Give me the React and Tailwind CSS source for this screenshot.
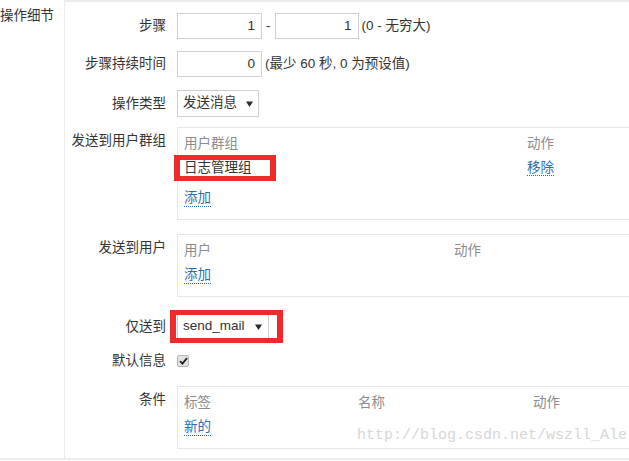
import React from "react";

const Tri = () => (
  <svg width="7" height="6" viewBox="0 0 7 6" className="shrink-0">
    <path d="M0 0.5 L7 0.5 L3.5 6 Z" fill="#2b2b2b" />
  </svg>
);

const Link = ({ children }) => (
  <span className="text-[#2a6db5] leading-[17px] border-b border-dotted border-[#2a6db5]">{children}</span>
);

const Label = ({ children, top }) => (
  <div className={`w-[101px] shrink-0 text-right leading-[20px] ${top ? "pt-[4px]" : ""}`}>{children}</div>
);

const Box = ({ children, w = "w-[470px]" }) => (
  <div className={`${w} ml-[11px] border-y border-l border-[#e6e6e6] pt-[4px] pb-[9px] pl-[6px]`}>{children}</div>
);

export default function App() {
  return (
    <div className="relative w-[629px] h-[461px] overflow-hidden bg-white text-[13.5px] text-[#333] font-['Liberation_Sans','Noto_Sans_CJK_SC',sans-serif]">
      <div className="flex h-[460px] border-b-2 border-[#ececec]">
        <div className="w-[65px] shrink-0 border-r border-[#ececec] pt-[6px] leading-[20px]">操作细节</div>
        <div className="flex-1 border-t-2 border-[#ececec] flex flex-col">
          {/* 步骤 */}
          <div className="flex items-center mt-[11px] h-[26px]">
            <Label>步骤</Label>
            <div className="ml-[11px] w-[85px] h-[26px] border border-[#cfcfcf] flex items-center justify-end pr-[6px]">1</div>
            <span className="mx-[4px]">-</span>
            <div className="w-[84px] h-[26px] border border-[#cfcfcf] flex items-center justify-end pr-[6px]">1</div>
            <span className="ml-[3px]">(0 - 无穷大)</span>
          </div>
          {/* 步骤持续时间 */}
          <div className="flex items-center mt-[12px] h-[26px]">
            <Label>步骤持续时间</Label>
            <div className="ml-[11px] w-[85px] h-[26px] border border-[#cfcfcf] flex items-center justify-end pr-[6px]">0</div>
            <span className="ml-[3px]">(最少 60 秒, 0 为预设值)</span>
          </div>
          {/* 操作类型 */}
          <div className="flex items-center mt-[13px] h-[27px]">
            <Label>操作类型</Label>
            <div className="ml-[11px] w-[82px] h-[27px] border border-[#cfcfcf] flex items-center pl-[5px] gap-[9px]">
              <span>发送消息</span>
              <Tri />
            </div>
          </div>
          {/* 发送到用户群组 */}
          <div className="flex items-start mt-[10px]">
            <Label top>发送到用户群组</Label>
            <Box>
              <div className="flex h-[24px] items-center text-[#8c8c8c]">
                <div className="w-[343px]">用户群组</div>
                <div>动作</div>
              </div>
              <div className="flex h-[24px] items-center">
                <div className="w-[343px]">日志管理组</div>
                <div><Link>移除</Link></div>
              </div>
              <div className="flex h-[24px] items-center mt-[6px]">
                <Link>添加</Link>
              </div>
            </Box>
          </div>
          {/* 发送到用户 */}
          <div className="flex items-start mt-[14px]">
            <Label top>发送到用户</Label>
            <Box>
              <div className="flex h-[24px] items-center text-[#8c8c8c]">
                <div className="w-[270px]">用户</div>
                <div>动作</div>
              </div>
              <div className="flex h-[24px] items-center">
                <Link>添加</Link>
              </div>
            </Box>
          </div>
          {/* 仅送到 */}
          <div className="flex items-center mt-[16px] h-[27px]">
            <Label>仅送到</Label>
            <div className="ml-[11px] w-[92px] h-[27px] border border-[#cfcfcf] flex items-center pl-[5px] gap-[10px]">
              <span>send_mail</span>
              <Tri />
            </div>
          </div>
          {/* 默认信息 */}
          <div className="flex items-center mt-[11px] h-[20px]">
            <Label>默认信息</Label>
            <div className="ml-[11px] w-[12px] h-[12px] rounded-[2px] border border-[#b5b5b5] bg-[#e3e3e3] flex items-center justify-center">
              <svg width="9" height="8" viewBox="0 0 9 8">
                <path d="M1 4.2 L3.4 6.6 L8 1.2" stroke="#222" strokeWidth="1.8" fill="none" />
              </svg>
            </div>
          </div>
          {/* 条件 */}
          <div className="flex items-start mt-[15px]">
            <Label top>条件</Label>
            <Box>
              <div className="flex h-[24px] items-center text-[#8c8c8c]">
                <div className="w-[174px]">标签</div>
                <div className="w-[175px]">名称</div>
                <div>动作</div>
              </div>
              <div className="flex h-[24px] items-center">
                <Link>新的</Link>
              </div>
            </Box>
          </div>
        </div>
      </div>

      {/* annotations */}
      <div className="absolute left-[174px] top-[155px] w-[102px] h-[26px] border-x-[6px] border-y-[5px] border-[#ee2a2a]" />
      <div className="absolute left-[170px] top-[310px] w-[113px] h-[33px] border-x-[6px] border-y-[5px] border-[#ee2a2a]" />
      <div className="absolute left-[357px] top-[427px] whitespace-nowrap text-[15px] leading-[18px] text-[#d6d6d6] font-['Liberation_Mono',monospace]">
        http://blog.csdn.net/wszll_Ale
      </div>
    </div>
  );
}
